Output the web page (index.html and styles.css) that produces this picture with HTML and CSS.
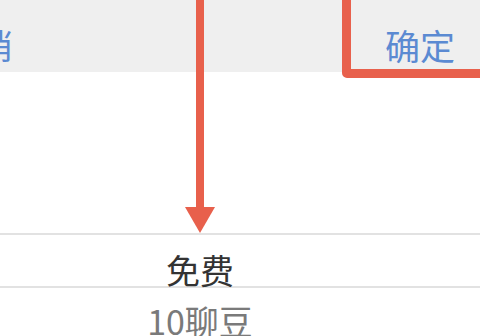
FILE: index.html
```html
<!DOCTYPE html>
<html lang="zh-CN">
<head>
<meta charset="utf-8">
<link rel="stylesheet" href="styles.css">
</head>
<body>
<div class="screen">
  <div class="toolbar">
    <span class="btn cancel">取消</span>
    <span class="btn confirm">确定</span>
  </div>
  <div class="gap"></div>
  <div class="picker">
    <div class="row selected">免费</div>
    <div class="row muted">10聊豆</div>
  </div>
  <div class="mark-box"></div>
  <div class="arrow-shaft"></div>
  <div class="arrow-head"></div>
</div>
</body>
</html>
```
FILE: styles.css
```css
html, body {
  margin: 0;
  padding: 0;
  background: #ffffff;
}
.screen {
  position: relative;
  width: 480px;
  height: 336px;
  overflow: hidden;
  font-family: "Noto Sans CJK SC", "Noto Sans", sans-serif;
}
.toolbar {
  height: 72px;
  box-sizing: border-box;
  padding-top: 28px;
  background: #efefef;
  display: flex;
  justify-content: space-between;
  align-items: flex-start;
}
.btn {
  font-size: 34px;
  line-height: 34px;
  color: #5b8ad2;
  white-space: nowrap;
}
.cancel {
  margin-left: -55px;
}
.confirm {
  margin-right: 25px;
  font-size: 35px;
}
.gap {
  height: 161px;
}
.picker {
  border-top: 2px solid #e2e2e2;
}
.row {
  padding-right: 80px;
  text-align: center;
  font-size: 34px;
  line-height: 34px;
  white-space: nowrap;
}
.selected {
  height: 53px;
  box-sizing: border-box;
  padding-top: 18px;
  border-bottom: 2px solid #e2e2e2;
  color: #333333;
}
.muted {
  padding-top: 16px;
  color: #7a7a7a;
}
.mark-box {
  position: absolute;
  left: 342px;
  top: -12px;
  width: 160px;
  height: 90px;
  box-sizing: border-box;
  border: 9px solid #e8604c;
  border-radius: 5px;
}
.arrow-shaft {
  position: absolute;
  left: 196px;
  top: 0;
  width: 8px;
  height: 212px;
  background: #e8604c;
}
.arrow-head {
  position: absolute;
  left: 185px;
  top: 207px;
  width: 0;
  height: 0;
  border-left: 15px solid transparent;
  border-right: 15px solid transparent;
  border-top: 26px solid #e8604c;
}
```
